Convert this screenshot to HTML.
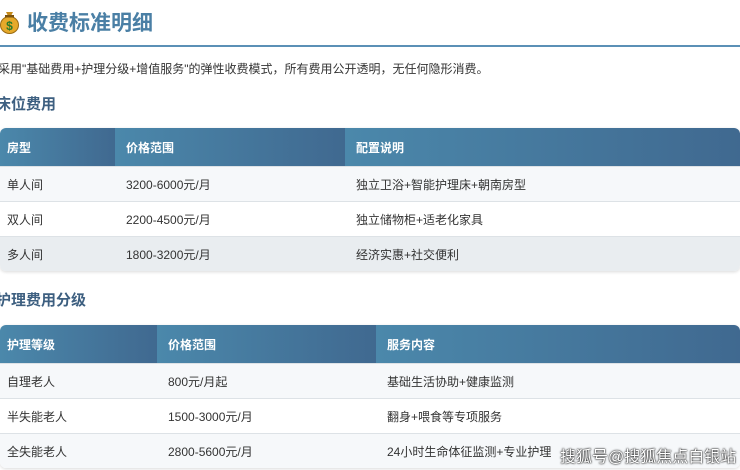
<!DOCTYPE html><html><head><meta charset="utf-8"><style>
body{margin:0;width:740px;height:470px;overflow:hidden;background:#fff;font-family:"Liberation Sans","Noto Sans CJK SC",sans-serif;color:#333;position:relative}
.a{position:absolute;white-space:nowrap}
.h1{left:27px;top:7px;font-size:21px;font-weight:bold;color:#4a7fa5}
.line{left:0;top:45px;width:740px;height:2px;background:#5b90b6}
.intro{left:-2px;top:60px;font-size:12px}
.h2{left:-4px;font-size:15px;font-weight:bold;color:#3d5f80}
table{position:absolute;left:0;width:740px;border-collapse:collapse;table-layout:fixed;font-size:12px;border-radius:6px;overflow:hidden;box-shadow:0 1px 3px rgba(0,0,0,.15)}
th{background:linear-gradient(90deg,#4b88ab,#406990);color:#fff;text-align:left;font-weight:bold;padding:0 0 0 11px;height:38px;font-size:12px}
td{padding:0 0 0 11px;height:34px;border-top:1px solid #dde2e6}
th:first-child,td:first-child{padding-left:7px}
tr.r1 td{background:#f6f8fa}tr.r2 td{background:#fff}tr.r3 td{background:#e9edf0}
</style></head><body>
<svg class="a" style="left:0;top:10px" width="19" height="24" viewBox="0 0 19 24"><path d="M6 2h7l-2 4h-3z" fill="#c58a1a"/><ellipse cx="9.5" cy="15" rx="9" ry="8.5" fill="#e6a92a" stroke="#9a6a10"/><rect x="5" y="5" width="9" height="2.5" fill="#7a5310"/><text x="9.5" y="20" font-size="12" text-anchor="middle" fill="#2a7a2a" font-weight="bold" font-family="Liberation Sans">$</text></svg>
<div class="a h1">收费标准明细</div>
<div class="a line"></div>
<div class="a intro">采用"基础费用+护理分级+增值服务"的弹性收费模式，所有费用公开透明，无任何隐形消费。</div>
<div class="a h2" style="top:93px">床位费用</div>
<table style="top:128px"><colgroup><col style="width:115px"><col style="width:230px"><col></colgroup><tr><th>房型</th><th>价格范围</th><th>配置说明</th></tr>
<tr class="r1"><td>单人间</td><td>3200-6000元/月</td><td>独立卫浴+智能护理床+朝南房型</td></tr>
<tr class="r2"><td>双人间</td><td>2200-4500元/月</td><td>独立储物柜+适老化家具</td></tr>
<tr class="r3"><td>多人间</td><td>1800-3200元/月</td><td>经济实惠+社交便利</td></tr></table>
<div class="a h2" style="top:289px">护理费用分级</div>
<table style="top:325px"><colgroup><col style="width:157px"><col style="width:219px"><col></colgroup><tr><th>护理等级</th><th>价格范围</th><th>服务内容</th></tr>
<tr class="r1"><td>自理老人</td><td>800元/月起</td><td>基础生活协助+健康监测</td></tr>
<tr class="r2"><td>半失能老人</td><td>1500-3000元/月</td><td>翻身+喂食等专项服务</td></tr>
<tr class="r1"><td>全失能老人</td><td>2800-5600元/月</td><td>24小时生命体征监测+专业护理</td></tr></table>
<div class="a" style="left:560px;top:443px;font-size:16px;color:#fff;text-shadow:0 0 2px #000,0 0 1px #000">搜狐号@搜狐焦点白银站</div>
</body></html>
